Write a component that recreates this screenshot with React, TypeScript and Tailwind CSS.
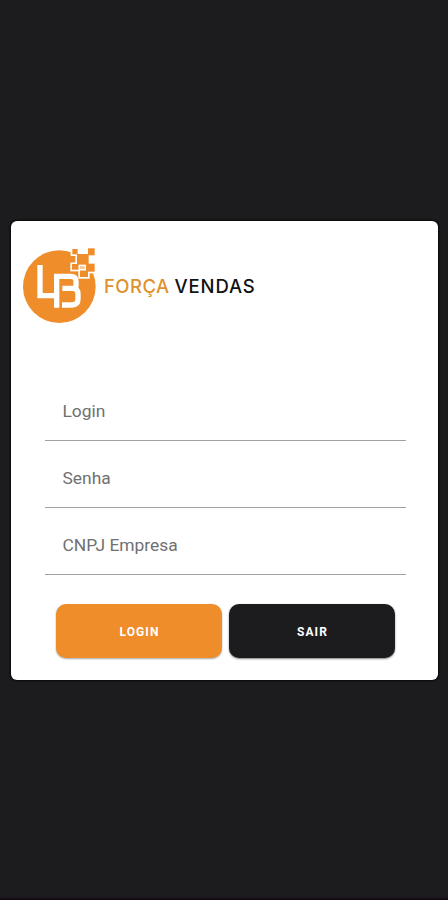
import { useState } from "react";

const fields = [
  { name: "login", label: "Login", type: "text" },
  { name: "senha", label: "Senha", type: "password" },
  { name: "cnpj", label: "CNPJ Empresa", type: "text" },
];

// x, y, width, height
const pixels = [
  [172, 27, 16, 16],
  [219, 25, 20, 21],
  [186, 42, 35, 33],
  [171, 72, 20, 17],
  [213, 71, 26, 24],
  [195, 91, 24, 20],
];

function Logo() {
  return (
    <svg width="74" height="76" viewBox="24 24 222 228" className="shrink-0">
      <circle cx="133" cy="140" r="109" fill="#f08d2b" />
      {/* Pixels */}
      <path d="M186 22h60v72h-26v-20h-34z" fill="#fff" />
      {pixels.map(([x, y, w, h]) => (
        <rect key={`b${x}-${y}`} x={x - 5} y={y - 5} width={w + 10} height={h + 10} fill="#fff" />
      ))}
      <path d="M164 48h12v19h-12z" fill="#f08d2b" />
      {pixels.map(([x, y, w, h]) => (
        <rect key={`p${x}-${y}`} x={x} y={y} width={w} height={h} fill="#f08d2b" />
      ))}
      <rect x="193" y="76" width="18" height="13" fill="#f8cb9c" stroke="#fff" strokeWidth="4" />
      {/* LB */}
      <g fill="none" stroke="#fff" strokeWidth="16">
        <path d="M75 75v92h46" />
        <path d="M125 203v-94h42q16 0 16 15v12q0 9-9 9h-32M174 145q15 1 15 17v15q0 18-18 18h-30" />
      </g>
    </svg>
  );
}

export default function App() {
  const [values, setValues] = useState<Record<string, string>>({});

  return (
    <div className="h-[900px] w-full bg-[#1c1c1e] border-b-2 border-[#160b12] pt-[221px] pl-[11px] pr-[10px] font-['Roboto',sans-serif]">
      <div className="h-[459px] rounded-[6px] bg-white shadow-[0_0_2px_1px_#080809] pt-[27px]">
        <div className="flex items-start pl-3">
          <Logo />
          <h1 className="ml-[7px] mt-[25px] flex gap-[5px] whitespace-nowrap font-['Inter',sans-serif] text-[18.5px] leading-[26px] font-medium">
            <span className="tracking-[0.45px] text-[#df912f]">FORÇA</span>
            <span className="tracking-[0.85px] text-[#111111]">VENDAS</span>
          </h1>
        </div>

        <form className="mt-[50px]" onSubmit={(e) => e.preventDefault()}>
          <div className="pl-[34px] pr-8">
            {fields.map((field) => (
              <label key={field.name} className="relative block h-[67px] border-b border-[#a2a2a2]">
                {!values[field.name] && (
                  <span className="absolute left-[17.5px] top-[25px] text-[17.4px] leading-6 text-[#707072]">{field.label}</span>
                )}
                <input
                  type={field.type}
                  aria-label={field.label}
                  className="h-full w-full bg-transparent px-[17px] pt-2 text-[17px] text-[#444444] outline-none"
                  value={values[field.name] || ""}
                  onChange={(e) => setValues({ ...values, [field.name]: e.target.value })}
                />
              </label>
            ))}
          </div>

          <div className="mt-[29px] flex gap-[7px] pl-[45px]">
            <button
              type="submit"
              className="h-[54px] w-[166px] rounded-[10px] bg-[#f08d2b] pt-0.5 pl-px text-xs font-bold tracking-[1.1px] text-white shadow-[0_1px_2px_rgba(0,0,0,0.35)]"
            >
              LOGIN
            </button>
            <button
              type="button"
              className="h-[54px] w-[166px] rounded-[10px] bg-[#1c1c1e] pt-0.5 pl-px text-xs font-bold tracking-[1.1px] text-white shadow-[0_1px_2px_rgba(0,0,0,0.5)]"
            >
              SAIR
            </button>
          </div>
        </form>
      </div>
    </div>
  );
}
